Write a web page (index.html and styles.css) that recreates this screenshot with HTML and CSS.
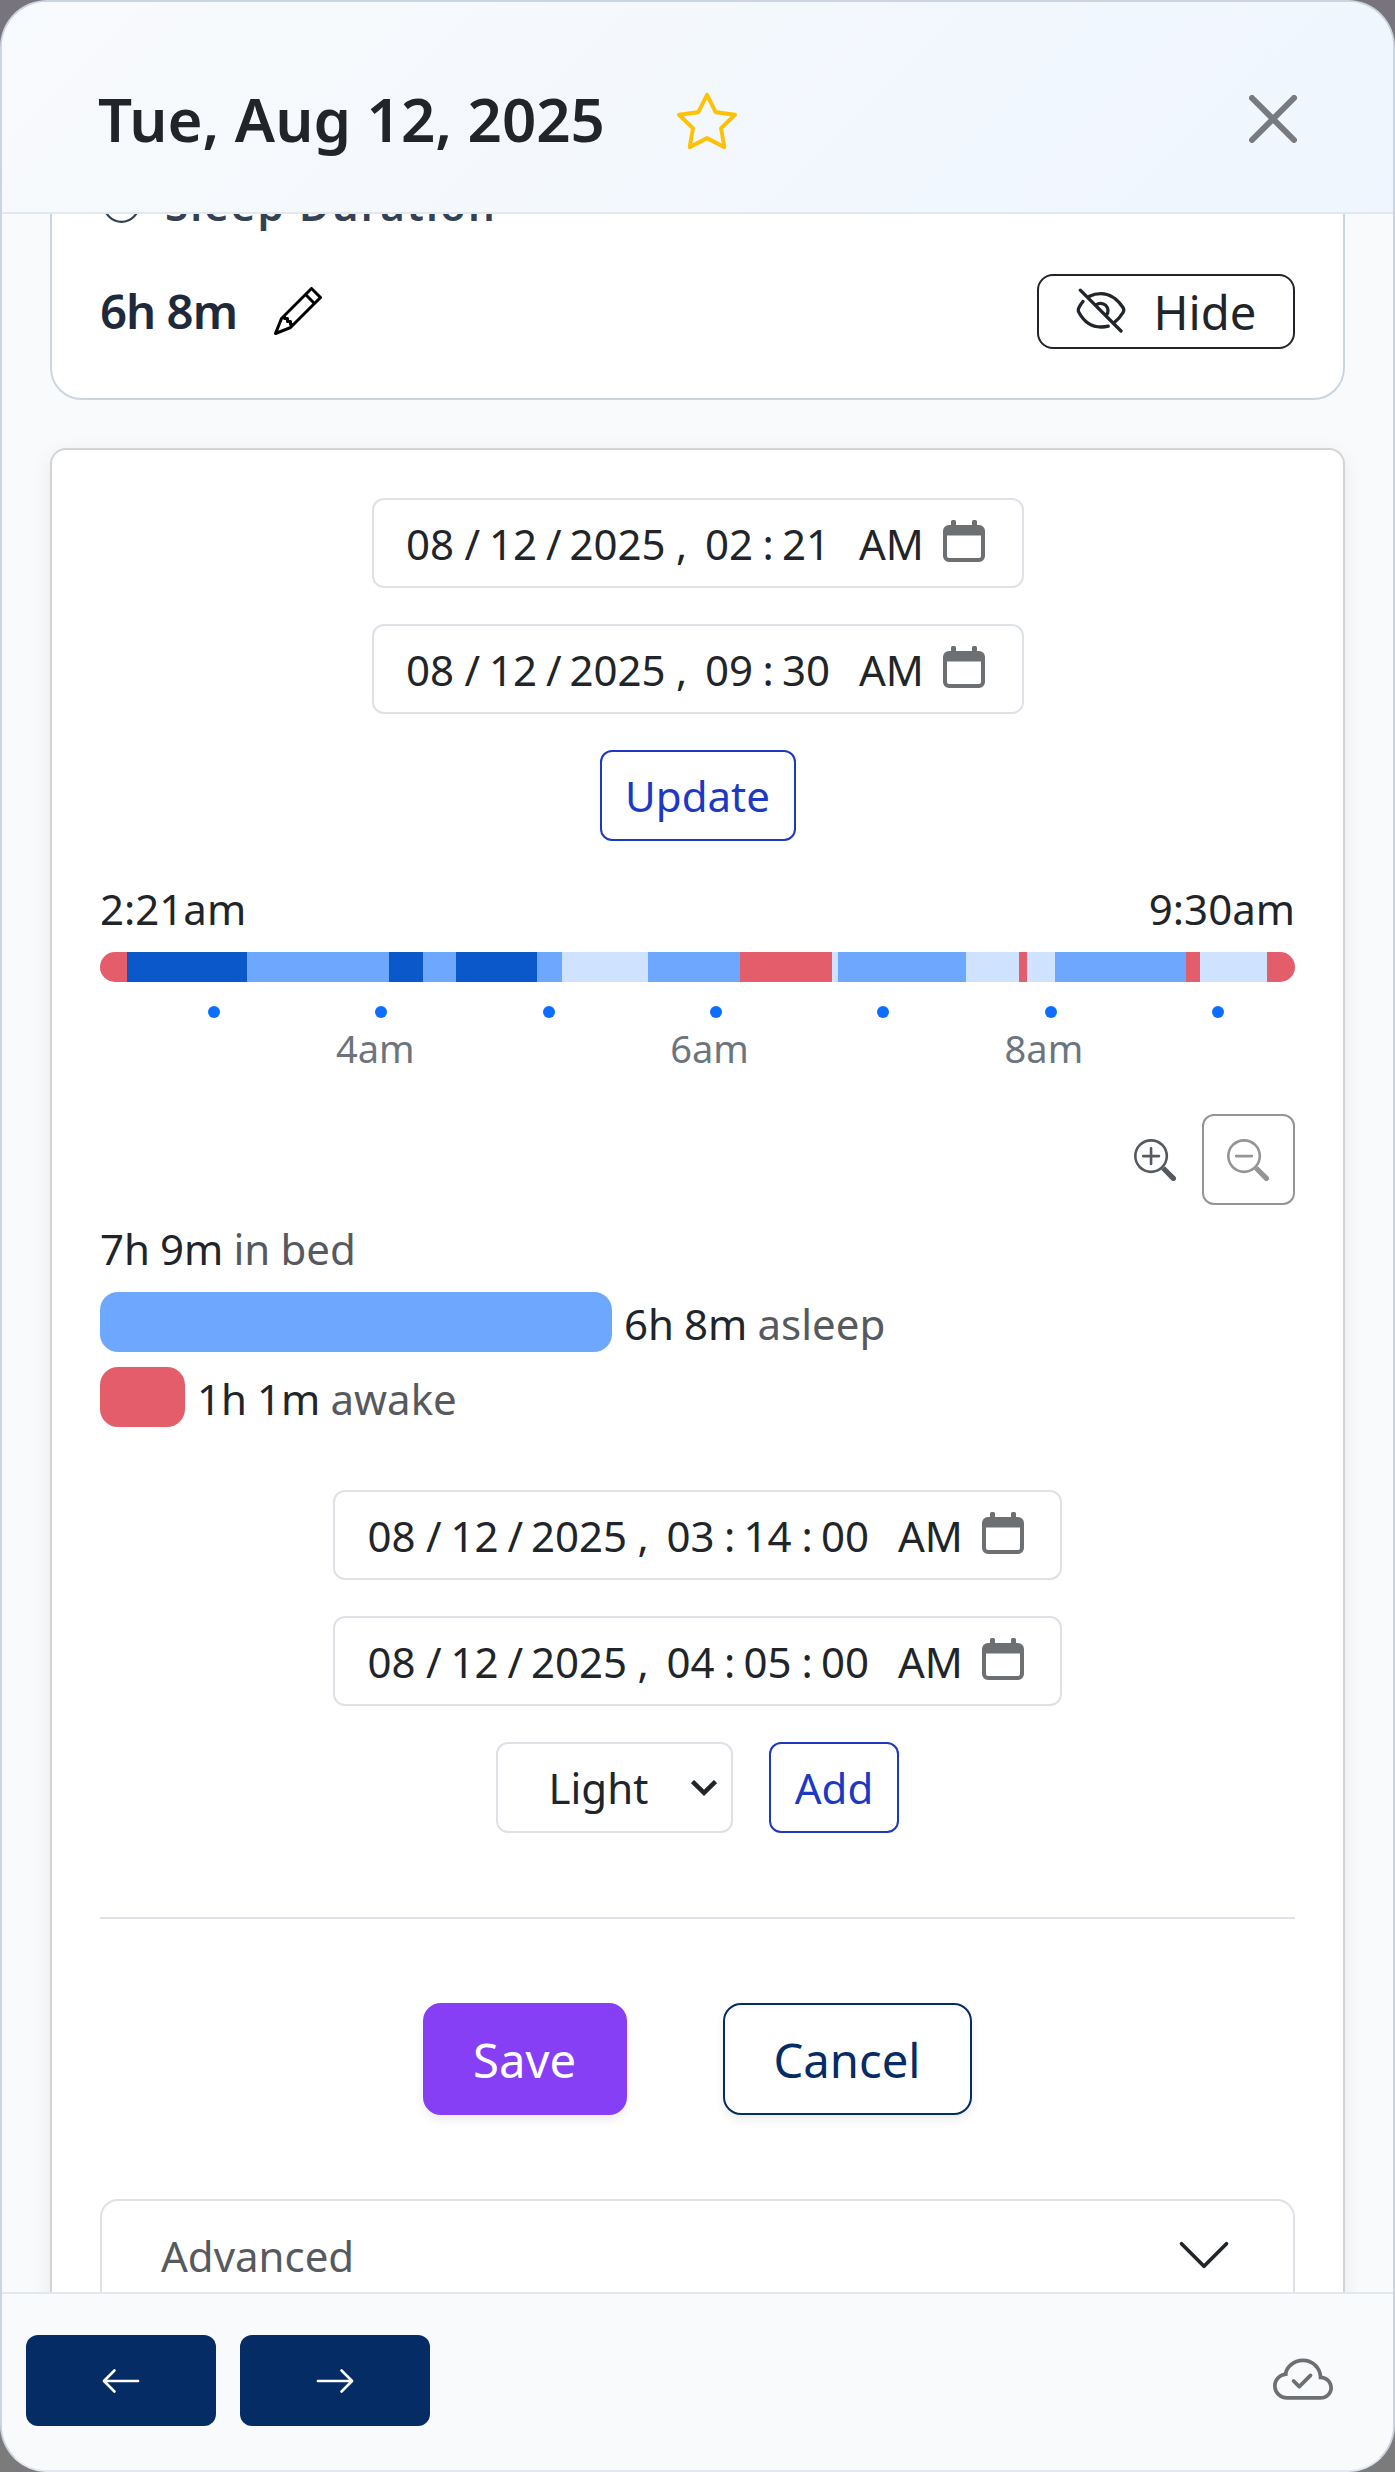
FILE: index.html
```html
<!DOCTYPE html>
<html lang="en">
<head>
<meta charset="utf-8">
<title>Tue, Aug 12, 2025</title>
<link rel="stylesheet" href="styles.css">
</head>
<body>
<div class="modal">
  <header class="modal-header">
    <h1 class="title">Tue, Aug 12, 2025</h1>
    <svg class="star" viewBox="0 0 16 16" fill="currentColor"><path d="M2.866 14.85c-.078.444.36.791.746.593l4.39-2.256 4.389 2.256c.386.198.824-.149.746-.592l-.83-4.73 3.522-3.356c.33-.314.16-.888-.282-.95l-4.898-.696L8.465.792a.513.513 0 0 0-.927 0L5.354 5.12l-4.898.696c-.441.062-.612.636-.283.95l3.523 3.356-.83 4.73zm4.905-2.767-3.686 1.894.694-3.957a.56.56 0 0 0-.163-.505L1.71 6.745l4.052-.576a.53.53 0 0 0 .393-.288L8 2.223l1.847 3.658a.53.53 0 0 0 .393.288l4.052.575-2.906 2.77a.56.56 0 0 0-.163.506l.694 3.957-3.686-1.894a.5.5 0 0 0-.461 0z"/></svg>
    <svg class="close" viewBox="0 0 16 16"><path d="M.293.293a1 1 0 0 1 1.414 0L8 6.586 14.293.293a1 1 0 1 1 1.414 1.414L9.414 8l6.293 6.293a1 1 0 0 1-1.414 1.414L8 9.414l-6.293 6.293a1 1 0 0 1-1.414-1.414L6.586 8 .293 1.707a1 1 0 0 1 0-1.414z"/></svg>
  </header>

  <main class="modal-body">
    <section class="card duration-card">
      <div class="card-label">
        <svg class="clock" viewBox="0 0 16 16" fill="currentColor"><path d="M8 3.5a.5.5 0 0 0-1 0V9a.5.5 0 0 0 .252.434l3.5 2a.5.5 0 0 0 .496-.868L8 8.71z"/><path d="M8 16A8 8 0 1 0 8 0a8 8 0 0 0 0 16m7-8A7 7 0 1 1 1 8a7 7 0 0 1 14 0"/></svg>
        <span>Sleep Duration</span>
      </div>
      <div class="duration-row">
        <span class="duration">6h 8m</span>
        <svg class="pencil" viewBox="0 0 16 16"><path d="M12.146.146a.5.5 0 0 1 .708 0l3 3a.5.5 0 0 1 0 .708l-10 10a.5.5 0 0 1-.168.11l-5 2a.5.5 0 0 1-.65-.65l2-5a.5.5 0 0 1 .11-.168zM11.207 2.5 13.5 4.793 14.793 3.5 12.5 1.207zm1.586 3L10.5 3.207 4 9.707V10h.5a.5.5 0 0 1 .5.5v.5h.5a.5.5 0 0 1 .5.5v.5h.293zm-9.761 5.175-.106.106-1.528 3.821 3.821-1.528.106-.106A.5.5 0 0 1 5 12.5V12h-.5a.5.5 0 0 1-.5-.5V11h-.5a.5.5 0 0 1-.468-.325"/></svg>
        <button class="hide-btn">
          <svg class="eye" viewBox="0 0 50 46" fill="none" stroke="currentColor" stroke-width="3.3" stroke-linecap="round" stroke-linejoin="round"><path d="M4.3 2.2 45 43"/><path d="M13.5 8.3C17.2 6.4 21 5.7 25 5.7 36 5.7 42.5 13 47 19.5Q48.6 22 47 24.5 43.8 29.9 38.8 34"/><path d="M7 13.5Q4.6 16.2 3 19.5 1.6 22 3 24.5C7.6 33 14.5 39 25 39Q29 39 32.2 38.200"/><path d="M19.8 17.2A7.3 7.3 0 0 1 30.3 27.3"/></svg>
          <span>Hide</span>
        </button>
      </div>
    </section>

    <section class="card editor-card">
      <div class="field"><span>08</span><span>/</span><span>12</span><span>/</span><span>2025</span><span>,</span><span>02</span><span>:</span><span>21</span><span>AM</span><svg class="calendar" viewBox="0 0 42 42"><path fill-rule="evenodd" d="M6 5H8V1.500a1.500 1.500 0 0 1 1.500-1.500h2A1.500 1.500 0 0 1 13 1.500V5H29V1.500A1.500 1.500 0 0 1 30.500 0h2A1.500 1.500 0 0 1 34 1.500V5h2a6 6 0 0 1 6 6V36a6 6 0 0 1-6 6H6a6 6 0 0 1-6-6V11A6 6 0 0 1 6 5ZM4 15.500V36a2 2 0 0 0 2 2H36a2 2 0 0 0 2-2V15.500Z"/></svg></div>
      <div class="field"><span>08</span><span>/</span><span>12</span><span>/</span><span>2025</span><span>,</span><span>09</span><span>:</span><span>30</span><span>AM</span><svg class="calendar" viewBox="0 0 42 42"><path fill-rule="evenodd" d="M6 5H8V1.500a1.500 1.500 0 0 1 1.500-1.500h2A1.500 1.500 0 0 1 13 1.500V5H29V1.500A1.500 1.500 0 0 1 30.500 0h2A1.500 1.500 0 0 1 34 1.500V5h2a6 6 0 0 1 6 6V36a6 6 0 0 1-6 6H6a6 6 0 0 1-6-6V11A6 6 0 0 1 6 5ZM4 15.500V36a2 2 0 0 0 2 2H36a2 2 0 0 0 2-2V15.500Z"/></svg></div>
      <button class="outline-btn update-btn">Update</button>

      <div class="timeline">
        <div class="range"><span>2:21am</span><span>9:30am</span></div>
        <div class="stages">
          <i class="awake" style="flex-grow:27"></i><i class="deep" style="flex-grow:120"></i><i class="light" style="flex-grow:142"></i><i class="deep" style="flex-grow:34"></i><i class="light" style="flex-grow:33"></i><i class="deep" style="flex-grow:81"></i><i class="light" style="flex-grow:25"></i><i class="rem" style="flex-grow:86"></i><i class="light" style="flex-grow:92"></i><i class="awake" style="flex-grow:92"></i><i class="rem" style="flex-grow:6"></i><i class="light" style="flex-grow:128"></i><i class="rem" style="flex-grow:53"></i><i class="awake" style="flex-grow:8"></i><i class="rem" style="flex-grow:28"></i><i class="light" style="flex-grow:131"></i><i class="awake" style="flex-grow:14"></i><i class="rem" style="flex-grow:67"></i><i class="awake" style="flex-grow:28"></i>
        </div>
        <div class="ticks"><i></i><i></i><i></i><i></i><i></i><i></i><i></i></div>
        <div class="hours"><span>4am</span><span>6am</span><span>8am</span></div>
      </div>

      <div class="zoom">
        <button class="zoom-btn"><svg viewBox="0 0 16 16" fill="currentColor"><path fill-rule="evenodd" d="M6.500 12a5.500 5.500 0 1 0 0-11 5.500 5.500 0 0 0 0 11M13 6.500a6.500 6.500 0 1 1-13 0 6.500 6.500 0 0 1 13 0"/><path d="M10.344 11.742q.044.060.098.115l3.850 3.850a1 1 0 0 0 1.415-1.414l-3.850-3.850a1 1 0 0 0-.115-.100 6.500 6.500 0 0 1-1.398 1.400z"/><path fill-rule="evenodd" d="M6.500 3a.5.5 0 0 1 .5.5V6h2.500a.5.5 0 0 1 0 1H7v2.500a.5.5 0 0 1-1 0V7H3.500a.5.5 0 0 1 0-1H6V3.500a.5.5 0 0 1 .5-.5"/></svg></button>
        <button class="zoom-btn disabled"><svg viewBox="0 0 16 16" fill="currentColor"><path fill-rule="evenodd" d="M6.500 12a5.500 5.500 0 1 0 0-11 5.500 5.500 0 0 0 0 11M13 6.500a6.500 6.500 0 1 1-13 0 6.500 6.500 0 0 1 13 0"/><path d="M10.344 11.742q.044.060.098.115l3.850 3.850a1 1 0 0 0 1.415-1.414l-3.850-3.850a1 1 0 0 0-.115-.100 6.500 6.500 0 0 1-1.398 1.400z"/><path fill-rule="evenodd" d="M3 6.500a.5.5 0 0 1 .5-.5h6a.5.5 0 0 1 0 1h-6a.5.5 0 0 1-.5-.5"/></svg></button>
      </div>

      <div class="stats">
        <div class="stat"><span>7h 9m <em>in bed</em></span></div>
        <div class="stat"><i class="stat-bar light" style="width:512px"></i><span>6h 8m <em>asleep</em></span></div>
        <div class="stat"><i class="stat-bar awake" style="width:85px"></i><span>1h 1m <em>awake</em></span></div>
      </div>

      <div class="field with-seconds"><span>08</span><span>/</span><span>12</span><span>/</span><span>2025</span><span>,</span><span>03</span><span>:</span><span>14</span><span>:</span><span>00</span><span>AM</span><svg class="calendar" viewBox="0 0 42 42"><path fill-rule="evenodd" d="M6 5H8V1.500a1.500 1.500 0 0 1 1.500-1.500h2A1.500 1.500 0 0 1 13 1.500V5H29V1.500A1.500 1.500 0 0 1 30.500 0h2A1.500 1.500 0 0 1 34 1.500V5h2a6 6 0 0 1 6 6V36a6 6 0 0 1-6 6H6a6 6 0 0 1-6-6V11A6 6 0 0 1 6 5ZM4 15.500V36a2 2 0 0 0 2 2H36a2 2 0 0 0 2-2V15.500Z"/></svg></div>
      <div class="field with-seconds"><span>08</span><span>/</span><span>12</span><span>/</span><span>2025</span><span>,</span><span>04</span><span>:</span><span>05</span><span>:</span><span>00</span><span>AM</span><svg class="calendar" viewBox="0 0 42 42"><path fill-rule="evenodd" d="M6 5H8V1.500a1.500 1.500 0 0 1 1.500-1.500h2A1.500 1.500 0 0 1 13 1.500V5H29V1.500A1.500 1.500 0 0 1 30.500 0h2A1.500 1.500 0 0 1 34 1.500V5h2a6 6 0 0 1 6 6V36a6 6 0 0 1-6 6H6a6 6 0 0 1-6-6V11A6 6 0 0 1 6 5ZM4 15.500V36a2 2 0 0 0 2 2H36a2 2 0 0 0 2-2V15.500Z"/></svg></div>
      <div class="add-row">
        <div class="select"><span>Light</span><svg class="caret" viewBox="0 0 26 16" fill="none" stroke="currentColor" stroke-width="4.500"><path d="M1.500 1.500 13 12.800 24.500 1.500"/></svg></div>
        <button class="outline-btn add-btn">Add</button>
      </div>

      <hr class="divider">

      <div class="actions">
        <button class="action save">Save</button>
        <button class="action cancel">Cancel</button>
      </div>

      <div class="accordion">
        <span>Advanced</span>
        <svg class="chevron" viewBox="0 0 16 16" fill="none" stroke="currentColor" stroke-linecap="round" stroke-linejoin="round"><path d="m2 5 6 6 6-6"/></svg>
      </div>
    </section>
  </main>

  <footer class="modal-footer">
    <button class="nav-btn"><svg viewBox="0 0 16 16" fill="currentColor"><path fill-rule="evenodd" d="M15 8a.5.5 0 0 0-.5-.5H2.707l3.147-3.146a.5.5 0 1 0-.708-.708l-4 4a.5.5 0 0 0 0 .708l4 4a.5.5 0 0 0 .708-.708L2.707 8.500H14.500A.5.5 0 0 0 15 8"/></svg></button>
    <button class="nav-btn"><svg viewBox="0 0 16 16" fill="currentColor"><path fill-rule="evenodd" d="M1 8a.5.5 0 0 1 .5-.5h11.793l-3.147-3.146a.5.5 0 0 1 .708-.708l4 4a.5.5 0 0 1 0 .708l-4 4a.5.5 0 0 1-.708-.708L13.293 8.500H1.500A.5.5 0 0 1 1 8"/></svg></button>
    <svg class="cloud" viewBox="0 0 16 16" fill="currentColor"><path fill-rule="evenodd" d="M10.354 6.146a.5.5 0 0 1 0 .708l-3 3a.5.5 0 0 1-.708 0l-1.500-1.500a.5.5 0 1 1 .708-.708L7 8.793l2.646-2.647a.5.5 0 0 1 .708 0"/><path d="M4.406 3.342A5.530 5.530 0 0 1 8 2c2.690 0 4.923 2 5.166 4.579C14.758 6.804 16 8.137 16 9.773 16 11.569 14.502 13 12.687 13H3.781C1.708 13 0 11.366 0 9.318c0-1.763 1.266-3.223 2.942-3.593.143-.863.698-1.723 1.464-2.383m.653.757c-.757.653-1.153 1.440-1.153 2.056v.448l-.445.049C2.064 6.805 1 7.952 1 9.318 1 10.785 2.230 12 3.781 12h8.906C13.980 12 15 10.988 15 9.773c0-1.216-1.020-2.228-2.313-2.228h-.5v-.5C12.188 4.825 10.328 3 8 3a4.530 4.530 0 0 0-2.941 1.100z"/></svg>
  </footer>
</div>
</body>
</html>
```
FILE: styles.css
```css
* { box-sizing: border-box; }

body {
  margin: 0;
  height: 2472px;
  overflow: hidden;
  background: linear-gradient(#78747c 50%, #7b7b7c 50%);
  color: #212529;
  font: 42px/63px "Noto Sans", sans-serif;
}

button {
  display: flex;
  align-items: center;
  justify-content: center;
  padding: 0;
  margin: 0;
  border: 2px solid transparent;
  background: #fff;
  color: inherit;
  font: inherit;
}

svg { display: block; flex: none; }

.modal {
  display: flex;
  flex-direction: column;
  height: 2472px;
  border: 2px solid #cbd5e1;
  border-bottom-color: #e2e8f0;
  border-radius: 47px;
  background: #f8fafc;
  overflow: hidden;
}

.modal-header {
  display: flex;
  align-items: center;
  flex: none;
  height: 212px;
  padding: 24px 96px 0 96px;
  border-bottom: 2px solid #e2e8f0;
  background: linear-gradient(135deg, #f8fafc 0%, #eff6ff 100%);
}

.title { margin: 0; font-size: 60px; font-weight: 600; line-height: 90px; }
.star { width: 60px; height: 60px; margin: 3px 0 0 72px; color: #ffc107; }
.close { width: 48px; height: 48px; margin-left: auto; opacity: .5; }

.modal-body {
  display: flex;
  flex-direction: column;
  flex: 1;
  gap: 48px;
  min-height: 0;
  padding: 0 48px;
  overflow: hidden;
}

.card { flex: none; border: 2px solid #cbd5e1; background: #fff; }

.duration-card {
  height: 279px;
  margin-top: -93px;
  padding: 50px 48px 49px;
  border-radius: 32px;
}

.card-label {
  display: flex;
  align-items: center;
  gap: 25px;
  padding-left: 3px;
  color: #334155;
  font-weight: 600;
  letter-spacing: 2.1px;
}
.clock { width: 37px; height: 37px; }

.duration-row { display: flex; align-items: center; height: 75px; margin-top: 37.5px; }
.duration {
  margin-bottom: 2px;
  color: #1e293b;
  font-size: 47.25px;
  font-weight: 600;
  letter-spacing: -.02em;
}
.pencil { width: 48px; height: 48px; margin-left: 37px; fill: #000; }

.hide-btn {
  gap: 28px;
  width: 258px;
  height: 75px;
  margin-left: auto;
  border-color: #212529;
  border-radius: 16px;
  font-size: 47.25px;
}
.eye { width: 50px; height: 46px; }

.editor-card {
  display: flex;
  flex-direction: column;
  align-items: center;
  height: 1900px;
  padding: 48px 48px 0;
  border-color: #d2d4d6;
  border-radius: 16px;
  box-shadow: 0 5px 20px rgba(0, 0, 0, .07);
}

.field {
  display: grid;
  grid-template-columns: 58.5px 24.5px 57px 23.5px 106.5px 29px 57.5px 19.5px 77px 84px 42px;
  align-items: center;
  width: 652px;
  height: 90px;
  margin-bottom: 36px;
  padding-left: 32.5px;
  border: 2px solid #dee2e6;
  border-radius: 12px;
}
.field.with-seconds {
  grid-template-columns: 58.5px 24.5px 57px 23.5px 106.5px 29px 57.5px 19.5px 58px 19.5px 77px 84px 42px;
  width: 729px;
}
.calendar { width: 42px; height: 42px; margin-bottom: 4px; fill: #6c7073; }

.outline-btn { height: 91px; border-color: #1d39c4; border-radius: 12px; color: #1d39c4; }
.update-btn { width: 196px; }
.add-btn { width: 130px; }

.timeline { width: 100%; margin-top: 36px; }
.range { display: flex; justify-content: space-between; }
.stages { display: flex; height: 30px; margin-top: 12px; border-radius: 15px; overflow: hidden; }
.stages i { flex-basis: 0; }
.awake { background: #e35d6a; }
.deep { background: #0a58ca; }
.light { background: #6ea8fe; }
.rem { background: #cfe2ff; }

.ticks { display: flex; justify-content: space-between; margin-top: 24px; padding: 0 71px 0 108px; }
.ticks i { width: 12px; height: 12px; border-radius: 50%; background: #0d6efd; }
.hours {
  display: flex;
  margin-top: 2px;
  padding-left: 236px;
  color: #6c757d;
  font-size: 38px;
  line-height: 57px;
}
.hours span { flex: none; width: 334.3px; }
.hours span:last-child { width: auto; }

.zoom { display: flex; justify-content: flex-end; width: 100%; margin-top: 37px; }
.zoom-btn { width: 93.5px; height: 91px; border-radius: 12px; color: #565a5e; }
.zoom-btn svg { width: 42px; height: 42px; }
.zoom-btn.disabled { border-color: #939596; color: #939596; }

.stats {
  display: flex;
  flex-direction: column;
  gap: 12px;
  width: 100%;
  margin: 12px 0 60px;
  word-spacing: -.8px;
}
.stat { display: flex; gap: 12px; height: 63px; }
.stat-bar { height: 60px; border-radius: 18px; }
.stat em { color: #565a5e; font-style: normal; }

.add-row { display: flex; gap: 36px; }
.select {
  display: flex;
  align-items: center;
  justify-content: space-between;
  width: 237px;
  height: 91px;
  padding: 0 14px 0 50.5px;
  border: 2px solid #dee2e6;
  border-radius: 12px;
}
.caret { width: 26px; height: 16px; }

.divider { width: 100%; height: 2px; margin: 84px 0; border: 0; background: #dee2e6; }

.actions { display: flex; gap: 96px; margin-right: 1px; }
.action {
  height: 112px;
  border-radius: 18px;
  box-shadow: 0 5px 10px rgba(0, 0, 0, .075);
  font-size: 47.25px;
}
.save { width: 204px; border-color: #863ff5; background: #863ff5; color: #fff; }
.cancel { width: 249px; border-color: #052c65; color: #052c65; }

.accordion {
  display: flex;
  align-items: center;
  justify-content: space-between;
  flex: none;
  width: 100%;
  height: 112px;
  margin-top: 84px;
  padding: 0 59px;
  border: 2px solid #dee2e6;
  border-radius: 18px 18px 0 0;
  color: #565a5e;
}
.chevron { width: 60px; height: 60px; color: #212529; }

.modal-footer {
  display: flex;
  align-items: center;
  gap: 24px;
  flex: none;
  height: 178px;
  padding: 0 60px 3px 23.5px;
  border-top: 2px solid #e2e8f0;
  background: #f8fafc;
}
.nav-btn { width: 190px; height: 91px; border: 0; border-radius: 12px; background: #052c65; color: #fff; }
.nav-btn svg { width: 42px; height: 42px; }
.cloud { width: 60px; height: 60px; margin-left: auto; color: #6c7073; }
```
